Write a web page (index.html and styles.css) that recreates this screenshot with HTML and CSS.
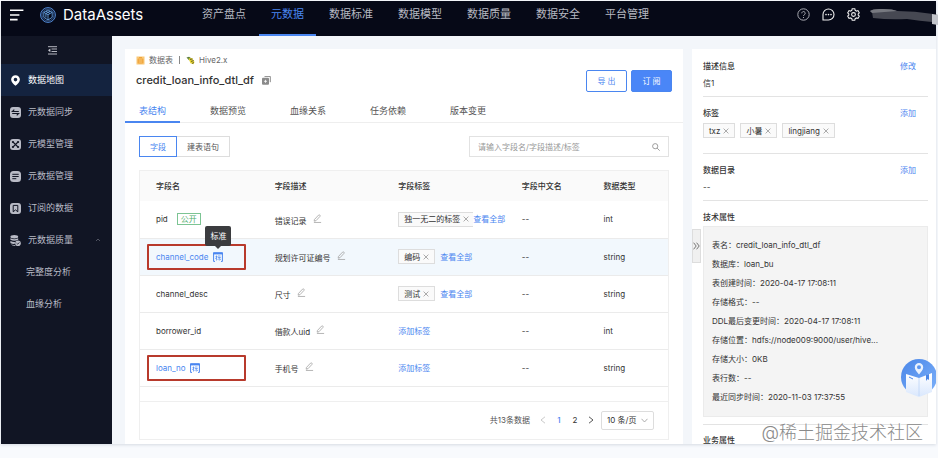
FILE: index.html
```html
<!DOCTYPE html>
<html lang="zh-CN">
<head>
<meta charset="utf-8">
<meta name="viewport" content="width=device-width, initial-scale=1">
<title>DataAssets</title>
<link rel="stylesheet" href="styles.css">
</head>
<body>
<svg class="sprite" aria-hidden="true">
  <symbol id="i-close" viewBox="0 0 6 6"><path d="M.6.6l4.8 4.8M5.4.6L.6 5.4" stroke="currentColor" stroke-width=".7" fill="none"/></symbol>
  <symbol id="i-pen" viewBox="0 0 10 10"><path d="M1.6 6.1L6.2 1.2Q6.9.6 7.6 1.2T7.8 2.6L3.4 7.4 1.3 8zM1 9.4h8" stroke="currentColor" stroke-width=".8" fill="none"/></symbol>
  <symbol id="i-std" viewBox="0 0 10 10"><path d="M2 9.4H.6V.9h8.8v8.5H8" stroke="currentColor" fill="none"/><path d="M.2.4h9.6v2H.2z" fill="currentColor"/><path d="M2.500 4.600h2M3.500 3.500v5M3.400 5.400L2.500 7M5 4h2.500M4.800 5.500h3M6.300 5.500v3M5.300 6.700l-.5 1.200M7.200 6.700l.5 1.200" stroke="currentColor" stroke-width=".7" fill="none"/></symbol>
</svg>
<div class="app">
  <header class="topbar">
    <button class="icon-btn" aria-label="菜单"><svg width="14" height="12" viewBox="0 0 14 12"><path d="M0 1.2h13.4M0 6h9.4M0 10.6h7.6" stroke="#fff" stroke-width="1.6"/></svg></button>
    <a class="brand" href="#">
      <svg width="16" height="16" viewBox="0 0 16 16" fill="none" stroke="#5b9bf0"><circle cx="8" cy="8" r="7.4" stroke-width=".9"/><circle cx="8" cy="8" r="6" stroke-width=".5"/><path d="M8 3l4.2 2.3v5L8 13l-4.200-2.700v-5zM3.800 5.300L8 7.700l4.200-2.400M8 7.700V13M5.900 4.200l4.200 2.300M10.100 4.200L5.900 6.500v4" stroke="#6fb0f5" stroke-width=".8"/></svg>
      <span>DataAssets</span>
    </a>
    <nav class="topnav">
      <a href="#">资产盘点</a><a href="#" class="on">元数据</a><a href="#">数据标准</a><a href="#">数据模型</a><a href="#">数据质量</a><a href="#">数据安全</a><a href="#">平台管理</a>
    </nav>
    <div class="tools">
      <button class="icon-btn" aria-label="帮助"><svg width="13" height="13" viewBox="0 0 13 13" fill="none" stroke="#a9abb3"><circle cx="6.500" cy="6.500" r="5.700"/><path d="M4.800 5.300a1.700 1.700 0 1 1 2.600 1.400q-.9.500-.9 1.300M6.500 9v1"/></svg></button>
      <button class="icon-btn" aria-label="消息"><svg width="13" height="13" viewBox="0 0 13 13"><path d="M1 12V6.500A5.500 5.500 0 1 1 6.500 12z" fill="none" stroke="#eee" stroke-width="1.100"/><g fill="#eee"><circle cx="4" cy="6.600" r=".8"/><circle cx="6.500" cy="6.600" r=".8"/><circle cx="9" cy="6.600" r=".8"/></g></svg></button>
      <button class="icon-btn" aria-label="设置"><svg width="13" height="13" viewBox="0 0 13 13" fill="none" stroke="#eee" stroke-width="1.100"><path d="M5.200.8h2.600l.4 1.500 1.300.8 1.500-.5 1.300 2.200-1.100 1.100v1.200l1.100 1.100-1.300 2.200-1.500-.5-1.300.8-.4 1.500H5.200l-.4-1.500-1.300-.8-1.500.5L.7 8.200l1.100-1.100V5.900L.7 4.800 2 2.600l1.500.5 1.300-.8z"/><circle cx="6.500" cy="6.500" r="1.900"/></svg></button>
      <svg class="user" width="68" height="18" viewBox="0 0 68 18"><path d="M0 3Q3 .5 13 1q10 0 14 2 18 0 36 3l5 1v8l-6-1q-12-1-25-3-18 1-34-1l-1-6z" fill="#464852"/><path d="M0 3Q3 .5 13 1q10 0 14 2L2 5z" fill="#777980"/><path d="M62 6l6 1v10l-6-1z" fill="#c3c5cb"/></svg>
    </div>
  </header>
  <div class="body">
    <aside class="sidebar">
      <button class="collapse" aria-label="收起"><svg width="9" height="9" viewBox="0 0 9 9"><path d="M0 .7h9M3.500 3h5.500M3.500 5.500h5.500M0 8h9" stroke="#c8cad2" stroke-width=".9"/><path d="M2.400 2.400v3.800L0 4.300z" fill="#c8cad2"/></svg></button>
      <a class="item on" href="#"><svg viewBox="0 0 11 11"><path d="M5.500.2a4.400 4.400 0 0 1 4.400 4.400c0 2.400-2.400 4.600-4.400 6.200C3.500 9.200 1.100 7 1.100 4.600A4.400 4.400 0 0 1 5.500.2zm0 2.600a1.800 1.800 0 1 0 0 3.600 1.800 1.800 0 0 0 0-3.600z" fill="#fff"/></svg>数据地图</a>
      <a class="item" href="#"><svg viewBox="0 0 11 11"><rect width="11" height="11" rx="3" fill="#b9bbc6"/><path d="M8.800 4.500H2.400L4.300 2.700M2.200 6.500h6.400L6.700 8.300" stroke="#111524" stroke-width="1.100" fill="none"/></svg>元数据同步</a>
      <a class="item" href="#"><svg viewBox="0 0 11 11"><rect width="11" height="11" rx="3" fill="#b9bbc6"/><path d="M3 3l5 5M8 3L3 8" stroke="#111524" stroke-width="1.100"/><g fill="#111524"><circle cx="2.900" cy="3" r="1.100"/><circle cx="8.100" cy="3" r="1.100"/><circle cx="2.900" cy="8" r="1.100"/><circle cx="8.100" cy="8" r="1.100"/></g></svg>元模型管理</a>
      <a class="item" href="#"><svg viewBox="0 0 11 11"><rect width="11" height="11" rx="3.500" fill="#b9bbc6"/><path d="M2.300 3.300h6.400M2.300 5.500h6.400M2.300 7.700h4" stroke="#111524"/></svg>元数据管理</a>
      <a class="item" href="#"><svg viewBox="0 0 11 11"><rect width="11" height="11" rx="3" fill="#b9bbc6"/><path d="M3.200 8.800V2.400h4.600v6.400L5.500 6.900z" stroke="#111524" fill="none"/></svg>订阅的数据</a>
      <a class="item" href="#"><svg viewBox="0 0 11 11"><g fill="#b9bbc6"><ellipse cx="4.300" cy="1.800" rx="3.900" ry="1.700"/><path d="M.4 3.300q3.900 2 7.800 0v1.500q-3.900 2-7.800 0zM.4 6.100q2.700 1.300 4.600.9l-.3 2q-2.600.2-4.300-1zM.8 9.300q2 .9 4.200.6l.6 1.100Q2 11 .8 9.300z"/><circle cx="8" cy="8.200" r="2.800"/></g><path d="M6.600 8.200l1.100 1 1.700-1.800" stroke="#111524" stroke-width=".8" fill="none"/></svg>元数据质量<svg class="caret" viewBox="0 0 6 6"><path d="M1 4l2-2 2 2" stroke="#6b6e7c" stroke-width=".7" fill="none"/></svg></a>
      <a class="item sub" href="#">完整度分析</a>
      <a class="item sub" href="#">血缘分析</a>
    </aside>
    <main class="main">
      <section class="card">
        <div class="head">
          <div class="titles">
            <div class="crumb">
              <svg width="9" height="9" viewBox="0 0 9 9"><rect x=".5" y=".5" width="8" height="8" fill="#f9c877"/><path d="M2.200 3h4.600v4H2.200zM2.200 5h4.600M3 1.500h3" stroke="#ee9a2c" stroke-width=".8" fill="none"/></svg>
              <span>数据表</span><i></i>
              <svg width="9" height="9" viewBox="0 0 9 9"><path d="M.5 1.500L3 .8l3 2-3 1.500z" fill="#5d7f3b"/><path d="M2.500 2.500L6 2l2.500 4-1 2.300-3-1z" fill="#e4d22a"/><path d="M4 3.500l2.600-.6M5 5.500l2.800-1M6 7.500l2-1" stroke="#333" stroke-width=".7"/></svg>
              <span>Hive2.x</span>
            </div>
            <h1>credit_loan_info_dtl_df
              <button class="icon-btn" aria-label="复制"><svg width="9" height="9" viewBox="0 0 9 9"><path d="M2.500.4h5.800v5.800" stroke="#8b8b8b" fill="none"/><rect x="0" y="1.800" width="7" height="7" rx="1" fill="#8b8b8b"/><path d="M2 5.300h3M3.500 3.800v3" stroke="#fff" stroke-width=".8"/></svg></button>
            </h1>
          </div>
          <div class="actions"><button class="btn">导 出</button><button class="btn primary">订 阅</button></div>
        </div>
        <nav class="tabs"><a href="#" class="on">表结构</a><a href="#">数据预览</a><a href="#">血缘关系</a><a href="#">任务依赖</a><a href="#">版本变更</a></nav>
        <div class="content">
          <div class="toolbar">
            <div class="segment"><button class="on">字段</button><button>建表语句</button></div>
            <div class="search">
              <input type="text" aria-label="搜索字段" placeholder="请输入字段名/字段描述/标签">
              <svg width="8" height="8" viewBox="0 0 8 8" fill="none" stroke="#888" stroke-width=".8"><circle cx="3.200" cy="3.200" r="2.600"/><path d="M5.100 5.100l2.600 2.600"/></svg>
            </div>
          </div>
          <div class="grid">
            <table>
              <colgroup><col class="c1"><col class="c2"><col class="c2"><col class="c3"><col></colgroup>
              <thead><tr><th>字段名</th><th>字段描述</th><th>字段标签</th><th>字段中文名</th><th>数据类型</th></tr></thead>
              <tbody>
                <tr><td><div class="cell">pid<span class="open">公开</span></div></td>
                  <td><div class="desc">错误记录<button class="icon-btn" aria-label="编辑"><svg><use href="#i-pen"/></svg></button></div></td>
                  <td><div class="cell"><div class="tags"><span class="tag">独一无二的标签<button class="x" aria-label="删除"><svg><use href="#i-close"/></svg></button></span></div><a href="#">查看全部</a></div></td><td>--</td><td>int</td></tr>
                <tr class="hover"><td><div class="cell marked"><a href="#">channel_code</a><span class="std"><svg><use href="#i-std"/></svg><span class="tip" role="tooltip">标准</span></span></div></td>
                  <td><div class="desc">规划许可证编号<button class="icon-btn" aria-label="编辑"><svg><use href="#i-pen"/></svg></button></div></td>
                  <td><div class="cell"><div class="tags"><span class="tag">编码<button class="x" aria-label="删除"><svg><use href="#i-close"/></svg></button></span></div><a href="#">查看全部</a></div></td><td>--</td><td>string</td></tr>
                <tr><td>channel_desc</td>
                  <td><div class="desc">尺寸<button class="icon-btn" aria-label="编辑"><svg><use href="#i-pen"/></svg></button></div></td>
                  <td><div class="cell"><div class="tags"><span class="tag">测试<button class="x" aria-label="删除"><svg><use href="#i-close"/></svg></button></span></div><a href="#">查看全部</a></div></td><td>--</td><td>string</td></tr>
                <tr><td>borrower_id</td>
                  <td><div class="desc">借款人uid<button class="icon-btn" aria-label="编辑"><svg><use href="#i-pen"/></svg></button></div></td>
                  <td><a href="#">添加标签</a></td><td>--</td><td>int</td></tr>
                <tr><td><div class="cell marked"><a href="#">loan_no</a><span class="std"><svg><use href="#i-std"/></svg></span></div></td>
                  <td><div class="desc">手机号<button class="icon-btn" aria-label="编辑"><svg><use href="#i-pen"/></svg></button></div></td>
                  <td><a href="#">添加标签</a></td><td>--</td><td>string</td></tr>
              </tbody>
            </table>
            <div class="pager">
              <span class="total">共13条数据</span>
              <button aria-label="上一页"><svg width="6" height="8" viewBox="0 0 6 8"><path d="M5 .8L1 4l4 3.200" stroke="#bbb" stroke-width=".8" fill="none"/></svg></button>
              <button class="on">1</button><button>2</button>
              <button aria-label="下一页"><svg width="6" height="8" viewBox="0 0 6 8"><path d="M1 .8L5 4 1 7.200" stroke="#444" stroke-width=".9" fill="none"/></svg></button>
              <div class="size"><select aria-label="每页条数"><option>10 条/页</option><option>20 条/页</option></select><svg width="7" height="5" viewBox="0 0 7 5"><path d="M.5.8l3 3.200 3-3.200" stroke="#999" stroke-width=".8" fill="none"/></svg></div>
            </div>
          </div>
        </div>
      </section>
      <aside class="panel">
        <button class="handle" aria-label="收起面板"><svg width="7" height="8" viewBox="0 0 7 8"><path d="M.6.700L3.200 4 .6 7.300M3.600.7L6.200 4 3.600 7.300" stroke="#555" stroke-width=".8" fill="none"/></svg></button>
        <section><h2>描述信息<a href="#">修改</a></h2><p>信1</p></section>
        <section><h2>标签<a href="#">添加</a></h2>
          <div class="taglist"><span class="tag">txz<button class="x" aria-label="删除"><svg><use href="#i-close"/></svg></button></span><span class="tag">小暑<button class="x" aria-label="删除"><svg><use href="#i-close"/></svg></button></span><span class="tag">lingjiang<button class="x" aria-label="删除"><svg><use href="#i-close"/></svg></button></span></div></section>
        <section><h2>数据目录<a href="#">添加</a></h2><p>--</p></section>
        <section class="tech"><h2>技术属性</h2>
          <ul><li>表名：credit_loan_info_dtl_df</li><li>数据库：loan_bu</li><li>表创建时间：<time>2020-04-17 17:08:11</time></li><li>存储格式：--</li><li>DDL最后变更时间：<time>2020-04-17 17:08:11</time></li><li>存储位置：hdfs://node009:9000/user/hive...</li><li>存储大小：0KB</li><li>表行数：--</li><li>最近同步时间：<time>2020-11-03 17:37:55</time></li></ul></section>
        <section><h2>业务属性</h2></section>
        <button class="guide" aria-label="指引"><svg width="44" height="44" viewBox="0 0 44 44"><defs><linearGradient id="g" x1="0" y1="0" x2="1" y2="1"><stop offset="0" stop-color="#4a86e8"/><stop offset="1" stop-color="#7eb2fa"/></linearGradient><linearGradient id="p" x1="0" y1="0" x2="0" y2="1"><stop offset="0" stop-color="#fff"/><stop offset="1" stop-color="#d9e7fd"/></linearGradient></defs><circle cx="22" cy="20" r="18" fill="url(#g)"/><path d="M9 17l13 4 13-5v19l-13 5-13-5z" fill="url(#p)"/><path d="M22 21v18" stroke="#bcd4f8" stroke-width=".8"/><path d="M12 20l4 2" stroke="#4a86e8"/><path d="M29 18l3-1v6l-1.500-1-1.500 2z" fill="#4a86e8"/><path d="M22 6a4.200 4.200 0 0 1 4.200 4.200c0 2.600-2.400 5-4.200 7.300-1.800-2.300-4.200-4.700-4.200-7.300A4.200 4.200 0 0 1 22 6zm0 2.200a2 2 0 1 0 0 4 2 2 0 0 0 0-4z" fill="#eaf2fe"/></svg></button>
      </aside>
    </main>
  </div>
</div>
<div class="watermark">@稀土掘金技术社区</div>
</body>
</html>
```
FILE: styles.css
```css
* { box-sizing: border-box; }
body {
  margin: 0;
  height: 100vh;
  padding: 1px 2px 14px 1px;
  display: flex;
  flex-direction: column;
  position: relative;
  overflow: hidden;
  background: #f8fafd;
  color: #333;
  font: 8px/10px Inter, "Noto Sans CJK SC", sans-serif;
}
a { color: #4a86f0; text-decoration: none; }
button, input, select { font: inherit; color: inherit; margin: 0; padding: 0; border: 0; background: none; }
button { cursor: pointer; }
svg { display: block; flex: none; }
h1, h2, p, ul { margin: 0; padding: 0; }
.sprite { position: absolute; width: 0; height: 0; }
.icon-btn { display: flex; }

.app { flex: 1; min-height: 0; display: flex; flex-direction: column; box-shadow: 0 1px 3px #d5dae3; }
.topbar { flex: none; height: 35px; display: flex; align-items: stretch; background: #060917; padding-left: 9px; }
.topbar > .icon-btn { align-self: center; padding-bottom: 8px; }
.brand { display: flex; align-items: center; gap: 7px; width: 150px; margin-left: 16px; padding-bottom: 8px; color: #fff; font-size: 15px; font-weight: 400; line-height: 20px; }
.topnav { flex: 1; display: flex; gap: 1px; }
.topnav a { padding: 6px 12px 0; font-size: 11px; line-height: 15px; color: #b7b9c2; border-bottom: 2px solid transparent; white-space: nowrap; }
.topnav a.on { color: #4a86f0; border-color: #4a86f0; }
.tools { display: flex; align-items: flex-start; gap: 12px; padding-top: 7px; }
.user { margin: 0 -2px 0 -2px; }

.body { flex: 1; min-height: 0; display: flex; }
.sidebar { flex: none; width: 111px; background: #111524; }
.collapse { display: flex; width: 100%; height: 28px; align-items: center; justify-content: center; padding-right: 8px; }
.item { display: flex; align-items: center; gap: 7px; height: 32px; padding-left: 9px; font-size: 9px; line-height: 12px; color: #b9bbc6; }
.item svg { width: 11px; height: 11px; }
.item.on { background: #14233f; color: #fff; }
.item .caret { width: 6px; height: 6px; margin: 0 11px 0 auto; }
.item.sub { padding-left: 25px; }

.main { flex: 1; min-width: 0; display: flex; gap: 9px; padding: 13px 0 0 13px; background: #f3f6fa; }
.card { flex: 1; min-width: 0; background: #fff; }
.head { display: flex; justify-content: space-between; height: 50px; padding: 6px 11px 7px; }
.crumb { display: flex; align-items: center; gap: 4px; color: #666; }
.crumb i { width: 1px; height: 8px; margin: 0 2px; background: #888; }
h1 { display: flex; align-items: center; gap: 8px; margin-top: 7px; font-size: 11px; line-height: 16px; font-weight: 500; }
.actions { display: flex; align-items: flex-end; gap: 4px; }
.btn { width: 41px; height: 22px; border: 1px solid #4a86f0; border-radius: 2px; color: #4a86f0; }
.btn.primary { background: #4a86f7; color: #fff; }
.tabs { display: flex; gap: 16px; height: 24px; border-bottom: 1px solid #eee; }
.tabs a { height: 24px; padding: 0 14px; font-size: 9px; line-height: 24px; color: #555; border-bottom: 2px solid transparent; }
.tabs a.on { color: #4a86f0; border-color: #4a86f0; }
.content { padding: 13px 14px 0; }
.toolbar { display: flex; justify-content: space-between; margin-bottom: 13px; }
.segment { display: flex; height: 21px; }
.segment button { padding: 0 10px; border: 1px solid #ddd; border-left: 0; color: #555; }
.segment .on { border: 1px solid #4a86f0; color: #4a86f0; }
.search { display: flex; align-items: center; width: 200px; height: 21px; padding: 0 8px; border: 1px solid #e2e2e2; }
.search input { flex: 1; min-width: 0; outline: 0; }
.search input::placeholder { color: #999; }

.grid { border: 1px solid #efefef; }
table { width: 100%; table-layout: fixed; border-collapse: collapse; margin-bottom: 14px; }
.c1 { width: 25.5%; }
.c2 { width: 23.4%; }
.c3 { width: 15.5%; }
th, td { height: 37px; padding: 0; text-align: left; border-bottom: 1px solid #ebebeb; white-space: nowrap; }
th { height: 30px; background: #fafafa; border: 0; font-weight: 500; }
th:first-child, td:first-child { padding-left: 16px; }
.hover { background: #f2f8fd; }
.cell { display: flex; align-items: center; }
.desc { display: flex; align-items: flex-end; gap: 6px; padding-top: 1px; }
.desc svg { width: 9px; height: 9px; margin-bottom: 3px; color: #999; }
.open { margin-left: 9px; padding: 0 3px; border: 1px solid #7cc493; color: #4fae6c; }
.tags { display: flex; max-width: 75px; overflow: hidden; }
.tag { flex: none; display: flex; align-items: center; gap: 3px; height: 15px; padding: 0 5px; border: 1px solid #ddd; background: #fafafa; }
.tags .tag { margin-right: 5px; }
.x svg { width: 6px; height: 6px; color: #888; }
.marked { position: relative; gap: 5px; }
.marked::after { content: ""; position: absolute; left: -9px; right: 29px; top: -8px; bottom: -8px; border: 2px solid #b83a2c; border-radius: 1px; }
.std { position: relative; color: #4a86f0; }
.std svg { width: 10px; height: 10px; }
.tip { position: absolute; z-index: 1; left: 50%; bottom: 16px; transform: translateX(-50%); padding: 5px; border-radius: 2px; background: #3b3c3f; color: #fff; }
.tip::after { content: ""; position: absolute; left: 50%; top: 100%; margin-left: -3px; border: 3px solid transparent; border-top-color: #3b3c3f; }

.pager { display: flex; align-items: center; justify-content: flex-end; height: 38px; padding-right: 14px; border-top: 1px solid #efefef; }
.pager button { width: 16px; display: flex; justify-content: center; }
.pager button.on { color: #4a86f0; font-weight: 500; }
.total { margin-right: 5px; color: #555; }
.size { display: flex; align-items: center; position: relative; margin-left: 2px; }
.size select { appearance: none; width: 53px; height: 19px; padding: 0 5px; border: 1px solid #ddd; border-radius: 2px; }
.size svg { position: absolute; right: 6px; pointer-events: none; }

.panel { position: relative; flex: none; width: 244px; padding: 1px 8px 0 11px; background: #fff; overflow: hidden; }
.panel section { padding: 11px 0 8px; border-bottom: 1px solid #e3e3e3; }
.panel h2 { display: flex; justify-content: space-between; padding-right: 12px; font-size: 8px; line-height: 10px; font-weight: 500; }
.panel h2 a { font-weight: 400; }
.panel p { margin-top: 7px; }
.taglist { display: flex; gap: 5px; margin: 5px 0 7px; }
.panel .tech { padding-bottom: 7px; }
.panel section:last-of-type { padding: 10px 0 0; border: 0; }
.tech ul { margin-top: 4px; padding: 9px 8px; list-style: none; background: #f4f4f4; border: 1px solid #ebebeb; }
.tech li { line-height: 19px; white-space: nowrap; }
.handle { position: absolute; left: 0; top: 180px; display: flex; align-items: center; justify-content: center; width: 9px; height: 34px; background: #f0f0f0; border: 1px solid #ddd; }
.guide { position: absolute; right: -5px; bottom: 43px; }
.watermark { position: absolute; right: 15px; bottom: 12px; font-size: 18px; line-height: 26px; font-weight: 300; color: #8a8a8a; text-shadow: 1px 1px 0 #fff; }
```
